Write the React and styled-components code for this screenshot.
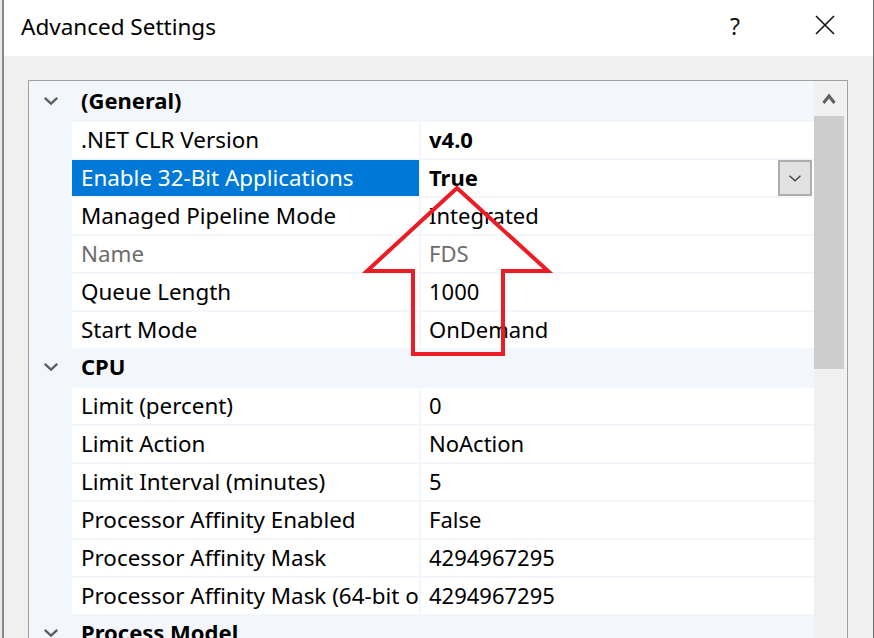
import React from 'react'
import styled, { createGlobalStyle } from 'styled-components'

const Global = createGlobalStyle`
  html, body { margin: 0; padding: 0; background: #e9e9e9; overflow: hidden; }
  body { font-family: "Noto Sans", "Open Sans", sans-serif; }
`;

const Page = styled.div`position: relative; width: 874px; height: 638px; overflow: hidden;`;

const Window = styled.div`margin-left: 2px; width: 869px; height: 638px;
border-left: 2px solid #8a8a8a; border-right: 1px solid #6f6f6f;
background: #f0f0f0; display: flex; flex-direction: column;`;

const TitleBar = styled.div`height: 56px; background: #fff; display: flex; align-items: center;
padding-left: 17px; flex-shrink: 0;`;
const Title = styled.div`font-size: 22.5px; color: #000; flex: 1; padding-bottom: 3px;`;
const Help = styled.div`font-size: 23px; color: #111; width: 24px; text-align: center; margin-right: 68px; padding-bottom: 5px;`;
const CloseBtn = styled.div`width: 20px; height: 20px; margin-right: 38px; margin-bottom: 6px; display: flex;`;

const Body = styled.div`flex: 1; padding: 24px 0 0 24px;`;

const Grid = styled.div`width: 818px; height: 600px; border: 1px solid #a0a0a0; background: #f3f6fb;
display: flex;`;

const Rows = styled.div`width: 785px; padding-top: 1px;`;

const CatRow = styled.div`height: 38px; display: flex; align-items: center;`;
const Gutter = styled.div`width: 43px; height: 100%; display: flex; align-items: center; justify-content: center;
flex-shrink: 0; padding-left: 1px; box-sizing: border-box;`;
const CatName = styled.div`font-weight: 700; font-size: 22px; padding-left: 9px; padding-bottom: 2px; color: #000;`;

const PropRow = styled.div`height: 38px; display: flex; padding-top: 2px; box-sizing: border-box;`;
const Label = styled.div`width: 347px; height: 36px; display: flex; align-items: center; padding: 0 0 2px 9px;
box-sizing: border-box; font-size: 22.4px; white-space: nowrap; overflow: hidden;
background: ${p => (p.selected ? '#0078d7' : '#fff')};
color: ${p => (p.selected ? '#fff' : p.disabled ? '#6d6d6d' : '#000')};`;
const Value = styled.div`width: 393px; margin-left: 2px; height: 36px; display: flex; align-items: center;
padding: 0 0 2px 8px; box-sizing: border-box; font-size: 22px; background: #fff;
font-weight: ${p => (p.bold ? 700 : 400)};
color: ${p => (p.disabled ? '#6d6d6d' : '#000')};`;
const ValueText = styled.span`flex: 1;`;
const DropBtn = styled.div`width: 34px; height: 36px; box-sizing: border-box; border: 2px solid #adadad;
background: #e1e1e1; display: flex; align-items: center; justify-content: center; margin: 2px 2px 0 0;`;

const ScrollBar = styled.div`width: 32px; background: #f0f0f0; display: flex; flex-direction: column;`;
const ScrollUp = styled.div`height: 35px; display: flex; align-items: center; justify-content: center; padding-right: 2px;`;
const Thumb = styled.div`width: 30px; height: 253px; background: #cdcdcd;`;

const Overlay = styled.svg`position: absolute; left: 0; top: 0; pointer-events: none;`;

const Chevron = ({ size = 16, color = '#5f5f5f', width = 2.5 }) => (
  <svg width={size} height={size * 0.6} viewBox="0 0 16 10">
    <polyline points="1.5,2 8,8 14.5,2" fill="none" stroke={color} strokeWidth={width} />
  </svg>
);

const data = [
  {
    name: '(General)',
    items: [
      { label: '.NET CLR Version', value: 'v4.0', bold: true },
      { label: 'Enable 32-Bit Applications', value: 'True', bold: true, selected: true },
      { label: 'Managed Pipeline Mode', value: 'Integrated' },
      { label: 'Name', value: 'FDS', disabled: true },
      { label: 'Queue Length', value: '1000' },
      { label: 'Start Mode', value: 'OnDemand' },
    ],
  },
  {
    name: 'CPU',
    items: [
      { label: 'Limit (percent)', value: '0' },
      { label: 'Limit Action', value: 'NoAction' },
      { label: 'Limit Interval (minutes)', value: '5' },
      { label: 'Processor Affinity Enabled', value: 'False' },
      { label: 'Processor Affinity Mask', value: '4294967295' },
      { label: 'Processor Affinity Mask (64-bit option)', value: '4294967295' },
    ],
  },
  { name: 'Process Model', items: [] },
];

export default function App() {
  return (
    <Page>
      <Global />
      <Window>
        <TitleBar>
          <Title>Advanced Settings</Title>
          <Help>?</Help>
          <CloseBtn>
            <svg width="20" height="20" viewBox="0 0 20 20">
              <path d="M1 1 L19 19 M19 1 L1 19" stroke="#111" strokeWidth="1.6" />
            </svg>
          </CloseBtn>
        </TitleBar>
        <Body>
          <Grid>
            <Rows>
              {data.map(cat => (
                <React.Fragment key={cat.name}>
                  <CatRow>
                    <Gutter><Chevron /></Gutter>
                    <CatName>{cat.name}</CatName>
                  </CatRow>
                  {cat.items.map(it => (
                    <PropRow key={it.label}>
                      <Gutter />
                      <Label selected={it.selected} disabled={it.disabled}>{it.label}</Label>
                      <Value bold={it.bold} disabled={it.disabled}>
                        <ValueText>{it.value}</ValueText>
                        {it.selected && (
                          <DropBtn><Chevron size={14} color="#444" width={1.6} /></DropBtn>
                        )}
                      </Value>
                    </PropRow>
                  ))}
                </React.Fragment>
              ))}
            </Rows>
            <ScrollBar>
              <ScrollUp>
                <svg width="14" height="12" viewBox="0 0 14 12">
                  <polyline points="1.5,10 7,3 12.5,10" fill="none" stroke="#606060" strokeWidth="3" />
                </svg>
              </ScrollUp>
              <Thumb />
            </ScrollBar>
          </Grid>
        </Body>
      </Window>
      <Overlay width="874" height="638">
        <polygon
          points="457,188 548,271 503,271 503,354 413,354 413,271 367,271"
          fill="none" stroke="#ed1c24" strokeWidth="4" strokeLinejoin="miter"
        />
      </Overlay>
    </Page>
  );
}
